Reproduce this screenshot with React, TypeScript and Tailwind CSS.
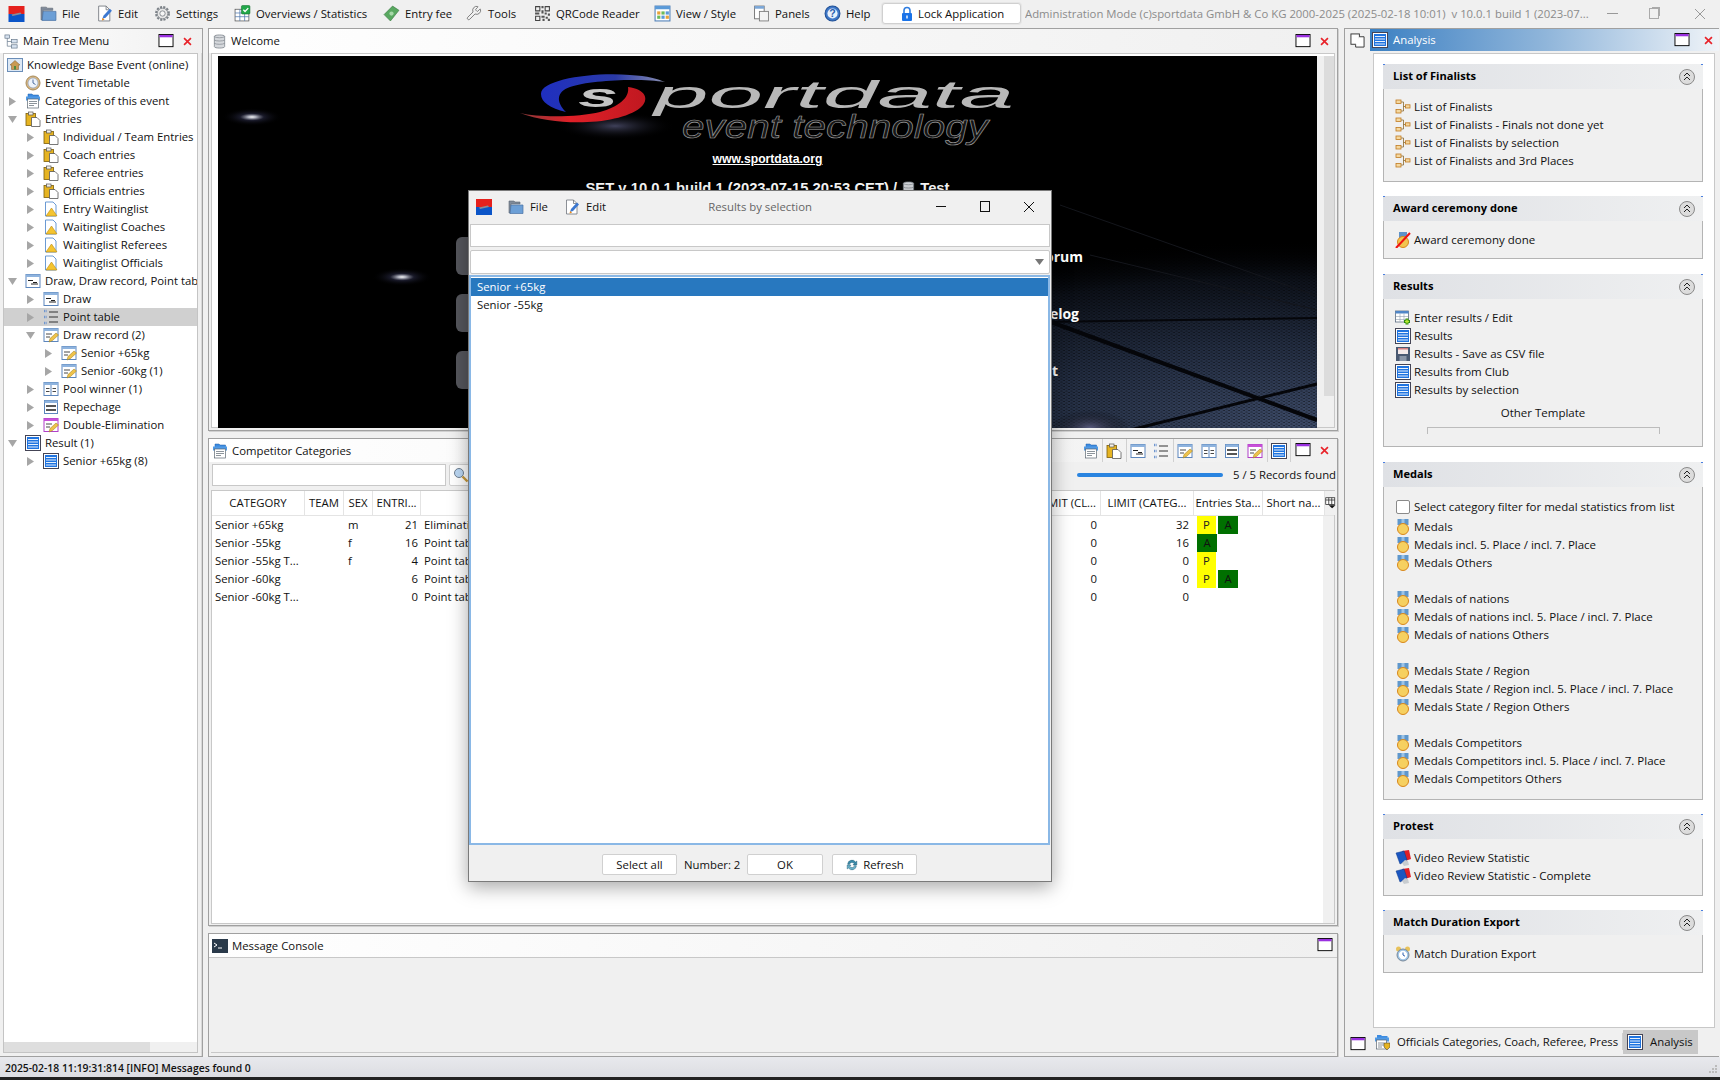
import React from "react";
import { Wrench } from "lucide-react";

const icons: Record<string, React.ReactNode> = {
  logo: (<><rect width="16" height="8" fill="#e5211d"/><rect y="8" width="16" height="8" fill="#0b55c8"/><path d="M3 8.6l9-2 1 1.4-9 2z" fill="#8c8c96"/></>),
  folder: (<><path d="M1 2h5l1 1h5v2H3v9H1z" fill="#7f8a99" stroke="#5d6673" strokeWidth=".6"/><path d="M3 6h12v8.5H2z" fill="#6c9fd6" stroke="#4a73a5" strokeWidth=".7"/></>),
  edit: (<><path d="M2.5 1h7l3.5 3.5V15h-10.500z" fill="#fff" stroke="#70757c" strokeWidth=".8"/><path d="M9.500 1v3.500H13" fill="none" stroke="#70757c" strokeWidth=".8"/><path d="M6 13l1-3 6-6.500 2 2-6 6.500z" fill="#3c78d0"/><path d="M5.500 14.500l.6-2.500 2 1.800z" fill="#e98a1c"/></>),
  gear: (<><circle cx="8" cy="8" r="6" fill="none" stroke="#7c8288" strokeWidth="2" strokeDasharray="2 1.140"/><circle cx="8" cy="8" r="5" fill="#e6e6e6" stroke="#7c8288" strokeWidth=".8"/><circle cx="8" cy="8" r="2.500" fill="#f6f6f6" stroke="#7c8288" strokeWidth=".8"/></>),
  over: (<><rect x="1" y="4" width="13" height="11" fill="#fff" stroke="#555" strokeWidth=".7"/><path d="M1 7.500h13M1 11h13M5.500 4v11M10 4v11" stroke="#4f78b0" strokeWidth=".7"/><rect x="7" y="0.500" width="8" height="8" rx="1" fill="#22a84a" stroke="#0e6a28" strokeWidth=".5"/><path d="M8.800 4.500l1.600 1.600 3-3.200" stroke="#fff" strokeWidth="1.200" fill="none"/></>),
  money: (<><path d="M1 9l8-8 6 4-8 10z" fill="#58a860" stroke="#3a7a42" strokeWidth=".6"/><circle cx="8" cy="8" r="2" fill="#a6d8a8"/></>),
  qr: (<><path d="M1 1h5v5H1zM2 2v3h3V2zM10 1h5v5h-5zM11 2v3h3V2zM1 10h5v5H1zM2 11v3h3v-3z" fill="#444" fillRule="evenodd"/><path d="M7 1h2v2H7zM7 5h2v3H7zM1 7h4v2H1zM10 7h2v2h-2zM13 8h2v2h-2zM7 10h3v2H7zM11 11h2v2h-2zM8 13h2v2H8zM13 13h2v2h-2z" fill="#555"/></>),
  view: (<><rect x="1" y="1" width="14" height="14" fill="#fff" stroke="#4f7fb8"/><rect x="1" y="1" width="14" height="3" fill="#5a9ad8"/><rect x="3" y="6" width="3" height="3" fill="#e8a33a"/><rect x="7" y="6" width="3" height="3" fill="#6dbb5a"/><rect x="11" y="6" width="3" height="3" fill="#5a9ad8"/><rect x="3" y="10" width="3" height="3" fill="#6dbb5a"/><rect x="7" y="10" width="3" height="3" fill="#5a9ad8"/><rect x="11" y="10" width="3" height="3" fill="#e8a33a"/></>),
  panels: (<><rect x="1.500" y="1" width="9" height="12" fill="#fff" stroke="#666" strokeWidth=".8"/><rect x="1.500" y="1" width="9" height="2.500" fill="#7ba7d8"/><rect x="6" y="6" width="8.500" height="9" fill="#f4f4f4" stroke="#777" strokeWidth=".8"/></>),
  help: (<><circle cx="8" cy="8" r="7" fill="#3f78c8" stroke="#1e4f96"/><circle cx="8" cy="8" r="4.800" fill="#e8f1fb"/><text x="8" y="11.500" textAnchor="middle" fontSize="10" fontWeight="700" fontFamily="Liberation Sans" fill="#2a5fae">?</text></>),
  lock: (<><path d="M5 7V4.500a3 3 0 016 0V7" fill="none" stroke="#2f7de0" strokeWidth="1.600"/><rect x="3" y="7" width="10" height="8" rx="1" fill="#1a73e8"/><rect x="7.300" y="9.500" width="1.400" height="3" fill="#fff"/></>),
  tree: (<><rect x="1" y="1" width="5" height="3.500" fill="#d8e3f0" stroke="#5f7286" strokeWidth=".7"/><rect x="8" y="6" width="6" height="3.500" fill="#d8e3f0" stroke="#5f7286" strokeWidth=".7"/><rect x="8" y="11.500" width="6" height="3.500" fill="#d8e3f0" stroke="#5f7286" strokeWidth=".7"/><path d="M3.500 4.500V13H8M3.500 8H8" fill="none" stroke="#5f7286" strokeWidth=".7"/></>),
  db: (<><path d="M2.500 2.500c0-2 11-2 11 0v11c0 2-11 2-11 0z" fill="#d6d9dd" stroke="#7a8088" strokeWidth=".8"/><path d="M2.500 2.800c2 1.600 9 1.600 11 0M2.500 6.500c2 1.300 9 1.300 11 0M2.500 10c2 1.300 9 1.300 11 0" fill="none" stroke="#7a8088" strokeWidth=".7"/></>),
  home: (<><rect x=".5" y="1.500" width="15" height="13" fill="#dce8f5" stroke="#6b8eb8"/><path d="M8 3.500L3 8h1.500v4.500h7V8H13z" fill="#c99a52" stroke="#7a5a2a" strokeWidth=".5"/><rect x="7" y="9" width="2" height="3.500" fill="#4f8a3c"/></>),
  clock: (<><circle cx="8" cy="8" r="7" fill="#d8b884" stroke="#a88a5a"/><circle cx="8" cy="8" r="5" fill="#eef3fa" stroke="#7f95b8" strokeWidth=".6"/><path d="M8 4.500V8l2.500 1.500" fill="none" stroke="#3a5f95" strokeWidth=".9"/></>),
  cats: (<><path d="M3 1h4l1 1h5.500v4H3z" fill="#3c8be0" stroke="#1f5fa8" strokeWidth=".5"/><rect x="1" y="3.500" width="14" height="4" fill="#4f9ae6"/><rect x="2.500" y="6" width="11" height="9" fill="#fff" stroke="#5a6570" strokeWidth=".7"/><path d="M4 8.500h8M4 10.500h8M4 12.500h5" stroke="#5a6570" strokeWidth=".7"/></>),
  clip: (<><rect x="1" y="2.500" width="9.500" height="12" fill="#e6b422" stroke="#7a5c0a" strokeWidth=".8"/><rect x="3.500" y="1" width="4.500" height="3" fill="#f4f0e6" stroke="#555" strokeWidth=".7"/><path d="M6.500 6.500H12l3 3v6H6.500z" fill="#fff" stroke="#555" strokeWidth=".8"/></>),
  wait: (<><path d="M2.500 1H10l3 3v11H2.500z" fill="#fff" stroke="#5a8fcf" strokeWidth=".9"/><path d="M8.500 7l5.500 8H3z" fill="#f4c430" stroke="#b88a10" strokeWidth=".6"/></>),
  draw: (<><rect x="1" y="1.500" width="14" height="13" fill="#fff" stroke="#5c86bd"/><rect x="1" y="1.500" width="14" height="2.500" fill="#8eb3de"/><path d="M3 7.500h5M6 11h7M8 9.500h4" stroke="#222" strokeWidth="1"/></>),
  pt: (<><path d="M1 2h3M1 8h3M1 14h3" stroke="#6f96cf" strokeWidth="2.500" strokeDasharray="1 .6"/><path d="M6 3h9M6 8h9M6 13h9" stroke="#333" strokeWidth="1"/></>),
  rec: (<><rect x="1" y="1.500" width="14" height="13" fill="#fff" stroke="#5c86bd"/><rect x="1" y="1.500" width="14" height="2.500" fill="#8eb3de"/><path d="M3 7h6M3 10h4" stroke="#333" strokeWidth=".9"/><path d="M6 15l1-3.500L13 6l2.500 2-6 5.500z" fill="#eec24a" stroke="#9a7a1a" strokeWidth=".5"/></>),
  pool: (<><rect x="1" y="1.500" width="14" height="13" fill="#fff" stroke="#5c86bd"/><rect x="1" y="1.500" width="14" height="2.500" fill="#8eb3de"/><path d="M8 4v10" stroke="#5c86bd"/><path d="M3 7.500h3.500M3 10.500h3.500M9.500 7.500H13M9.500 10.500H13" stroke="#333" strokeWidth=".9"/></>),
  rep: (<><rect x="1.500" y="1.500" width="13" height="13" fill="#fff" stroke="#5c86bd"/><rect x="1.500" y="1.500" width="13" height="2.500" fill="#8eb3de"/><rect x="3" y="6" width="10" height="2" fill="#555"/><rect x="3" y="10" width="10" height="2" fill="#555"/></>),
  dbl: (<><rect x="1" y="1.500" width="14" height="13" fill="#fff" stroke="#b040c8"/><rect x="1" y="1.500" width="14" height="2.500" fill="#c850d8"/><path d="M3 7h6M3 10h4" stroke="#333" strokeWidth=".9"/><path d="M6 15l1-3.500L13 6l2.500 2-6 5.500z" fill="#eec24a" stroke="#9a7a1a" strokeWidth=".5"/></>),
  res: (<><rect x=".5" y=".5" width="15" height="15" fill="#fff" stroke="#445"/><rect x="2" y="2" width="12" height="12" fill="#1f74e0"/><path d="M3 4.500h10M3 7h10M3 9.500h10M3 12h10" stroke="#fff" strokeWidth=".9"/></>),
  win: (<><rect x=".5" y=".5" width="15" height="13" fill="#fff" stroke="#000"/><rect x="1" y="1" width="14" height="2.500" fill="#9a30e0"/></>),
  x: (<path d="M3 3l10 10M13 3L3 13" stroke="#e8232a" strokeWidth="2.400"/>),
  fin: (<><path d="M6 3h2.500M6 12h2.500M8.500 3V12M8.500 7.500H11" stroke="#8a6a30" strokeWidth=".8" fill="none"/><rect x="1" y="1" width="5" height="3.500" fill="#f4d8a0" stroke="#c07a20" strokeWidth=".8"/><rect x="1" y="10.500" width="5" height="3.500" fill="#f4d8a0" stroke="#c07a20" strokeWidth=".8"/><rect x="10.500" y="5.800" width="4.500" height="3.200" fill="#f4d8a0" stroke="#c07a20" strokeWidth=".8"/></>),
  award: (<><rect x="4" y="0" width="8" height="6" fill="#5f92c8"/><circle cx="8" cy="10" r="5.500" fill="#f2c44e" stroke="#d8861a"/><path d="M1 16L15 1" stroke="#f01010" strokeWidth="2"/></>),
  enter: (<><rect x=".5" y="1" width="13" height="11" fill="#fff" stroke="#5a6b80" strokeWidth=".8"/><rect x=".5" y="1" width="13" height="2.500" fill="#4f86c8"/><path d="M1 6.500h12M1 9.500h12M5 3.500v8M9 3.500v8" stroke="#90a0b0" strokeWidth=".6"/><path d="M12 8.500v6M9 11.500h6" stroke="#2a8a10" strokeWidth="3"/><path d="M12 9.500v4M10 11.500h4" stroke="#b8e830" strokeWidth="1.400"/></>),
  save: (<><rect x="1" y="1" width="14" height="14" fill="#4a5a72"/><rect x="3" y="2" width="10" height="6" fill="#f4eaea"/><rect x="3" y="2" width="10" height="1.500" fill="#d88080"/><rect x="4.500" y="10" width="7" height="5" fill="#8a96a8"/></>),
  medal: (<><rect x="2.500" y="0" width="11" height="6" fill="#5f97cc"/><rect x="6.500" y="0" width="3" height="6" fill="#9cc3e6"/><circle cx="8" cy="10" r="5.500" fill="#f6d060" stroke="#d8861a" strokeWidth="1"/></>),
  video: (<><path d="M7 1l7-1 2 9-6 2z" fill="#e01f26"/><path d="M1 3l8-2 3 9-7 4z" fill="#1b56c0" stroke="#0c3a8a" strokeWidth=".5"/><path d="M7 13l3-3 3 1 1 4-5 1z" fill="#c8ccd0"/></>),
  alarm: (<><circle cx="3.500" cy="3" r="2.500" fill="#e8c25a"/><circle cx="12.500" cy="3" r="2.500" fill="#e8c25a"/><circle cx="8" cy="9" r="6" fill="#9cc3e6" stroke="#7a8a9a"/><circle cx="8" cy="9" r="4.200" fill="#fff"/><path d="M8 6.500V9l2 1.200" fill="none" stroke="#2a5fae"/></>),
  ofc: (<><path d="M3 1h4l1 1h5.500v4H3z" fill="#3c8be0"/><rect x="1" y="3.500" width="14" height="4" fill="#4f9ae6"/><rect x="2.500" y="6" width="10" height="9" fill="#fff" stroke="#5a6570" strokeWidth=".7"/><path d="M4 9h6M4 11h6M4 13h4" stroke="#5a6570" strokeWidth=".7"/><path d="M10 9h6v4l-3 3-3-3z" fill="#e6b422" stroke="#333" strokeWidth=".5"/></>),
  refresh: (<><path d="M3 7a5 5 0 019-2.500l1.500-1V8H9l1.500-1.500A3 3 0 005 7.500z" fill="#3a8aa8" stroke="#1e5a72" strokeWidth=".5"/><path d="M13 9a5 5 0 01-9 2.500l-1.500 1V8H7l-1.500 1.500A3 3 0 0011 8.500z" fill="#6ab0c8" stroke="#1e5a72" strokeWidth=".5"/></>),
  search: (<><circle cx="6" cy="6" r="4.500" fill="#bcd8f4" stroke="#6f7f90"/><path d="M9.500 9.500l5 5" stroke="#c89a3a" strokeWidth="2.400"/></>),
  copy: (<><rect x="1" y="1" width="9" height="11" fill="#fff" stroke="#333"/><path d="M10 4h5v11H6v-3" fill="#fff" stroke="#333"/></>),
  col: (<><rect x="1" y="1" width="12" height="9" fill="#fff" stroke="#222"/><path d="M1 4h12M5 1v9M9 1v9" stroke="#222"/><path d="M5 11h9l-4.500 4z" fill="#111"/></>),
};

function I({ n, w = 16, h = 16, c = "" }: { n: string; w?: number; h?: number; c?: string }) {
  return (
    <svg width={w} height={h} viewBox="0 0 16 16" className={`shrink-0 ${c}`}>
      {icons[n]}
    </svg>
  );
}

const menu = [
  ["folder", "File", "w-[56px]"],
  ["edit", "Edit", "w-[58px]"],
  ["gear", "Settings", "w-[80px]"],
  ["over", "Overviews / Statistics", "w-[149px]"],
  ["money", "Entry fee", "w-[83px]"],
  ["wrench", "Tools", "w-[68px]"],
  ["qr", "QRCode Reader", "w-[120px]"],
  ["view", "View / Style", "w-[99px]"],
  ["panels", "Panels", "w-[71px]"],
  ["help", "Help", "w-[58px]"],
];

function Toolbar() {
  return (
    <div className="flex h-[28px] items-center bg-[#f0f0f0] pb-[1px]">
      <div className="ml-[8px] mr-[15px] flex w-[17px] items-center">
        <I n="logo" w={17} h={16} />
      </div>
      {menu.map(([ic, t, w]) => (
        <div key={t} className={`flex items-center ${w}`}>
          <span className="flex w-[22px] shrink-0">
            {ic === "wrench" ? (
              <Wrench size={16} strokeWidth={1.2} className="text-[#666]" />
            ) : (
              <I n={ic} w={17} h={17} />
            )}
          </span>
          <span className="whitespace-nowrap">{t}</span>
        </div>
      ))}
      <div className="flex h-[21px] w-[139px] items-center rounded-[3px] border border-[#d0d0d0] bg-white pl-[16px] shadow-[0_0_0_1px_#e6e6e6]">
        <I n="lock" w={16} h={16} />
        <span className="ml-[3px]">Lock Application</span>
      </div>
      <div className="ml-[4px] w-[566px] overflow-hidden whitespace-nowrap text-[#8b8b8b]">
        Administration Mode (c)sportdata GmbH &amp; Co KG 2000-2025 (2025-02-18 10:01)&nbsp; v 10.0.1 build 1 (2023-07...
      </div>
      <div className="ml-[16px] h-px w-[11px] bg-[#999]" />
      <div className="ml-[31px] h-[11px] w-[10px] border border-[#aaa] shadow-[2px_-2px_0_-1px_#aaa]" />
      <svg width="12" height="12" viewBox="0 0 12 12" className="ml-[35px]">
        <path d="M1 1l10 10M11 1L1 11" stroke="#999" strokeWidth="1" />
      </svg>
    </div>
  );
}

type T = [number, string, string, ("o" | "c" | "")?, boolean?];
const tree: T[] = [
  [0, "home", "Knowledge Base Event (online)"],
  [1, "clock", "Event Timetable"],
  [1, "cats", "Categories of this event", "c"],
  [1, "clip", "Entries", "o"],
  [2, "clip", "Individual / Team Entries", "c"],
  [2, "clip", "Coach entries", "c"],
  [2, "clip", "Referee entries", "c"],
  [2, "clip", "Officials entries", "c"],
  [2, "wait", "Entry Waitinglist", "c"],
  [2, "wait", "Waitinglist Coaches", "c"],
  [2, "wait", "Waitinglist Referees", "c"],
  [2, "wait", "Waitinglist Officials", "c"],
  [1, "draw", "Draw, Draw record, Point table", "o"],
  [2, "draw", "Draw", "c"],
  [2, "pt", "Point table", "c", true],
  [2, "rec", "Draw record (2)", "o"],
  [3, "rec", "Senior +65kg", "c"],
  [3, "rec", "Senior -60kg (1)", "c"],
  [2, "pool", "Pool winner (1)", "c"],
  [2, "rep", "Repechage", "c"],
  [2, "dbl", "Double-Elimination", "c"],
  [1, "res", "Result (1)", "o"],
  [2, "res", "Senior +65kg (8)", "c"],
];
const pads = ["pl-[3px]", "pl-[3px]", "pl-[21px]", "pl-[39px]"];

function Arrow({ k }: { k: string }) {
  if (k === "o")
    return <svg width="9" height="9" viewBox="0 0 9 9"><path d="M0 1h9L4.500 8z" fill="#a6a6a6" /></svg>;
  if (k === "c")
    return <svg width="9" height="9" viewBox="0 0 9 9"><path d="M1 0l7 4.500L1 9z" fill="#a6a6a6" /></svg>;
  return null;
}

function Win({ c = "" }: { c?: string }) {
  return <I n="win" w={16} h={15} c={c} />;
}

function LeftPanel() {
  return (
    <div className="flex w-[203px] flex-col border-y border-r border-[#a0a0a0] shadow-[inset_-1px_0_0_#d8d8d8]">
      <div className="flex h-[24px] items-center bg-gradient-to-r from-white to-[#f0f0f0] pl-[4px]">
        <I n="tree" w={15} h={15} />
        <span className="ml-[4px] flex-1">Main Tree Menu</span>
        <Win />
        <I n="x" w={11} h={11} c="ml-[8px] mr-[9px]" />
      </div>
      <div className="ml-[3px] mr-[4px] flex h-[1000px] flex-col overflow-hidden border border-[#c4c4c4] bg-white pt-[2px]">
        <div className="flex-1">
          {tree.map(([l, ic, t, k, sel], i) => (
            <div key={i} className={`flex h-[18px] items-center whitespace-nowrap ${pads[l]} ${sel ? "bg-[#d0d0d0]" : ""}`}>
              {l > 0 && (
                <span className="flex w-[18px] shrink-0 items-center pl-[1px]">
                  <Arrow k={k || ""} />
                </span>
              )}
              <I n={ic} c="mr-[4px]" />
              <span>{t}</span>
            </div>
          ))}
        </div>
        <div className="h-[10px] bg-[#f0f0f0]">
          <div className="h-[10px] w-[146px] bg-[#dedede]" />
        </div>
      </div>
    </div>
  );
}

function Backdrop() {
  return (
    <svg viewBox="218 56 1099 372" className="absolute inset-0 h-full w-full">
      <defs>
        <radialGradient id="fl" cx="1300" cy="1420" r="620" gradientUnits="userSpaceOnUse" gradientTransform="scale(1 .3)">
          <stop offset="0" stopColor="#3d4b68" />
          <stop offset=".45" stopColor="#222c40" />
          <stop offset=".8" stopColor="#0c1018" />
          <stop offset="1" stopColor="#000" stopOpacity="0" />
        </radialGradient>
        <radialGradient id="lg">
          <stop offset="0" stopColor="#f4f4f4" />
          <stop offset=".14" stopColor="#a9abb8" />
          <stop offset=".4" stopColor="#23243a" stopOpacity=".7" />
          <stop offset="1" stopColor="#000" stopOpacity="0" />
        </radialGradient>
        <radialGradient id="gl">
          <stop offset="0" stopColor="#5a5c80" />
          <stop offset="1" stopColor="#000" stopOpacity="0" />
        </radialGradient>
        <linearGradient id="blue" x1="0" y1="0" x2="1" y2="0">
          <stop offset="0" stopColor="#1f2fc0" />
          <stop offset=".6" stopColor="#2a3aa8" />
          <stop offset="1" stopColor="#8a8fb0" />
        </linearGradient>
        <linearGradient id="red" x1="0" y1="0" x2="1" y2="0">
          <stop offset="0" stopColor="#8a3a3a" />
          <stop offset=".4" stopColor="#e02028" />
          <stop offset="1" stopColor="#c01820" />
        </linearGradient>
        <pattern id="mesh" width="5" height="3" patternUnits="userSpaceOnUse">
          <ellipse cx="1.500" cy="1" rx="1.300" ry=".6" fill="#000" opacity=".45" />
          <ellipse cx="4" cy="2.500" rx="1.300" ry=".6" fill="#000" opacity=".45" />
        </pattern>
      </defs>
      <rect x="218" y="56" width="1099" height="372" fill="#000" />
      <rect x="600" y="200" width="717" height="228" fill="url(#fl)" />
      <rect x="600" y="200" width="717" height="228" fill="url(#mesh)" />
      <g stroke="#05060a" fill="none">
        <path d="M1040 322L1317 318" strokeWidth="2" />
        <path d="M1040 318L1317 420" strokeWidth="4" />
        <path d="M1130 430L1317 384" strokeWidth="3" />
      </g>
      <g stroke="#14161c" fill="none">
        <path d="M1060 205L1317 296" />
        <path d="M1090 255L1317 310" />
      </g>
      <ellipse cx="1090" cy="428" rx="40" ry="18" fill="url(#gl)" />
      <ellipse cx="252" cy="117" rx="30" ry="9" fill="url(#lg)" />
      <ellipse cx="402" cy="277" rx="30" ry="9" fill="url(#lg)" />
      <ellipse cx="615" cy="126" rx="60" ry="14" fill="url(#gl)" opacity=".7" />
      <path d="M541 94C541 80 590 72 630 75C648 76 658 79 665 82C640 78 590 80 570 87C556 92 556 102 566 112C550 108 541 102 541 94Z" fill="url(#blue)" />
      <path d="M520 113C540 118 580 117 600 112C618 107 630 98 628 87C646 89 650 100 640 108C620 124 560 128 520 113Z" fill="url(#red)" />
      <text x="578" y="107" textLength="40" lengthAdjust="spacingAndGlyphs" fontFamily="Liberation Sans" fontWeight="700" fontStyle="italic" fontSize="34" fill="#c4c4c4">s</text>
      <text x="654" y="108" textLength="360" lengthAdjust="spacingAndGlyphs" fontFamily="Liberation Sans" fontStyle="italic" fontSize="38" fill="#b8b8b8">portdata</text>
      <text x="682" y="138" textLength="306" lengthAdjust="spacingAndGlyphs" fontFamily="Liberation Sans" fontStyle="italic" fontSize="34" fill="#151515" stroke="#a0a0a0" strokeWidth=".6">event technology</text>
    </svg>
  );
}

function Welcome() {
  return (
    <div className="flex h-[403px] flex-col border border-[#a0a0a0] shadow-[1px_1px_0_#d0d0d0]">
      <div className="flex h-[24px] items-center bg-gradient-to-r from-white to-[#f0f0f0] pl-[3px]">
        <I n="db" w={15} h={15} />
        <span className="ml-[4px] flex-1">Welcome</span>
        <Win />
        <I n="x" w={11} h={11} c="ml-[8px] mr-[7px]" />
      </div>
      <div className="mx-[2px] flex h-[375px] border border-[#c8c8c8] bg-white pl-[6px] pt-[2px]">
        <div className="relative h-[372px] w-[1099px] shrink-0 overflow-hidden bg-black font-['Liberation_Sans',sans-serif] text-white">
          <Backdrop />
          <div className="relative flex flex-col items-center pt-[94px]">
            <div className="text-[12.2px] font-bold underline">www.sportdata.org</div>
            <div className="mt-[9px] flex items-center text-[14.800px] font-bold whitespace-nowrap">
              SET v 10.0.1 build 1 (2023-07-15 20:53 CET) /<I n="db" w={15} h={15} c="mx-[4px]" />Test
            </div>
          </div>
          <div className="relative ml-[238px] mt-[38px] flex w-[627px] flex-col gap-[19px] font-['Open_Sans',sans-serif] text-[14px] font-bold">
            {["Forum", "Changelog", "Support"].map((t, i) => (
              <div key={t} className={`flex h-[38px] items-center justify-between ${i === 2 ? "pr-[25px]" : i === 1 ? "pr-[4px]" : ""}`}>
                <span className="h-[38px] w-[30px] rounded-[6px] bg-[#55565c]" />
                <span>{t}</span>
              </div>
            ))}
          </div>
        </div>
        <div className="h-full w-[18px] bg-[#f0f0f0] pl-[7px]">
          <div className="h-[340px] w-[10px] bg-[#dcdcdc]" />
        </div>
      </div>
    </div>
  );
}

const cols = ["w-[93px]", "w-[39px]", "w-[29px]", "w-[48px]", "w-[140px]", "w-[474px]", "w-[66px]", "w-[93px]", "w-[69px]", "w-[62px]"];
const heads = ["CATEGORY", "TEAM", "SEX", "ENTRI...", "DRAW", "", "LIMIT (CL...", "LIMIT (CATEG...", "Entries Sta...", "Short na..."];
const data: [string, string, string, string, string, string, string, string][] = [
  ["Senior +65kg", "m", "21", "Elimination", "0", "32", "P", "A"],
  ["Senior -55kg", "f", "16", "Point table", "0", "16", "", "A"],
  ["Senior -55kg T...", "f", "4", "Point table", "0", "0", "P", ""],
  ["Senior -60kg", "", "6", "Point table", "0", "0", "P", "A"],
  ["Senior -60kg T...", "", "0", "Point table", "0", "0", "", ""],
];

function Categories() {
  const tools = ["cats", "clip", "draw", "pt", "rec", "pool", "rep", "dbl", "res"];
  const seps = [0, 1, 3, 7, 8];
  return (
    <div className="mt-[7px] flex h-[488px] flex-col border border-[#a0a0a0] shadow-[1px_1px_0_#d0d0d0]">
      <div className="flex h-[23px] shrink-0 items-center bg-gradient-to-r from-white to-[#f0f0f0] pl-[3px]">
        <I n="cats" />
        <span className="ml-[4px] flex-1">Competitor Categories</span>
        {tools.map((t, i) => (
          <span key={t} className={`flex h-[23px] w-[23.500px] items-center justify-center ${seps.includes(i) ? "border-r border-[#d0d0d0]" : ""}`}>
            <I n={t} />
          </span>
        ))}
        <Win c="ml-[4px]" />
        <I n="x" w={11} h={11} c="ml-[8px] mr-[7px]" />
      </div>
      <div className="flex h-[28px] shrink-0 items-center pb-[2px] pl-[3px]">
        <div className="h-[22px] w-[234px] border border-[#c8c8c8] bg-white" />
        <div className="ml-[3px] flex h-[22px] w-[24px] items-center justify-center rounded-[2px] border border-[#d0d0d0] bg-white"><I n="search" /></div>
        <div className="ml-[604px] h-[4px] w-[146px] rounded-full bg-[#2a84e0]" />
        <span className="ml-[10px] whitespace-nowrap">5 / 5 Records found</span>
      </div>
      <div className="mx-[2px] mb-[1px] flex flex-1 flex-col border border-[#c8c8c8] bg-white">
        <div className="flex h-[25px] shrink-0 border-b border-[#e4e4e4]">
          {heads.map((h, i) => (
            <div key={i} className={`flex shrink-0 items-center justify-center overflow-hidden whitespace-nowrap border-r border-[#e4e4e4] ${cols[i]}`}>{h}</div>
          ))}
          <div className="flex flex-1 items-center justify-center bg-[#f0f0f0]"><I n="col" w={12} h={12} /></div>
        </div>
        <div className="flex flex-1">
          <div className="w-[1111px]">
            {data.map((r, i) => (
              <div key={i} className="flex h-[18px] items-center whitespace-nowrap">
                <span className="w-[131px] shrink-0 pl-[3px]">{r[0]}</span>
                <span className="w-[29px] shrink-0 pl-[5px]">{r[1]}</span>
                <span className="w-[46px] shrink-0 text-right">{r[2]}</span>
                <span className="w-[614px] shrink-0 pl-[6px]">{r[3]}</span>
                <span className="w-[66px] shrink-0 pr-[1px] text-right">{r[4]}</span>
                <span className="w-[91px] shrink-0 text-right">{r[5]}</span>
                <span className="ml-[8px] w-[19px] shrink-0">{r[6] && <span className="flex h-[18px] w-[19px] items-center justify-center bg-[#ffff00] text-[#222]">P</span>}</span>
                {r[6] ? (
                  <span className="ml-[2px] w-[20px] shrink-0">{r[7] && <span className="flex h-[18px] w-[20px] items-center justify-center bg-[#007000] text-[#111]">A</span>}</span>
                ) : null}
                {!r[6] && r[7] ? <span className="-ml-[19px] flex h-[18px] w-[20px] items-center justify-center bg-[#007000] text-[#111]">A</span> : null}
              </div>
            ))}
          </div>
          <div className="flex-1 self-stretch bg-[#f0f0f0]" />
        </div>
      </div>
    </div>
  );
}

function Console() {
  return (
    <div className="mt-[7px] flex flex-1 flex-col border border-[#a0a0a0] shadow-[1px_1px_0_#d0d0d0]">
      <div className="flex h-[24px] shrink-0 items-center border-b border-[#c8c8c8] bg-gradient-to-r from-white to-[#f0f0f0] pl-[3px]">
        <svg width="16" height="14" viewBox="0 0 16 14"><rect width="16" height="14" fill="#2a3a4a" /><path d="M2 4l3 2-3 2M6 9h4" stroke="#fff" fill="none" /></svg>
        <span className="ml-[4px] flex-1">Message Console</span>
        <Win c="mr-[4px]" />
      </div>
      <div className="mx-[2px] mb-[3px] flex-1 border-b border-[#c8c8c8] bg-[#f0f0f0]" />
    </div>
  );
}

function Section({ title, body, mb, children }: { title: string; body: string; mb: string; children: React.ReactNode }) {
  return (
    <div className={`relative ${mb}`}>
      <div className="flex h-[25px] items-center justify-between bg-gradient-to-r from-[#dfe1e5] to-[#eff0f1] pl-[10px] pr-[8px] text-[11.1px] font-bold text-black">
        <span>{title}</span>
        <span className="flex h-[16px] w-[16px] items-center justify-center rounded-full border border-[#8a8a8a] bg-[#dcdcdc]">
          <svg width="8" height="9" viewBox="0 0 8 9"><path d="M1 4l3-3 3 3M1 8l3-3 3 3" fill="none" stroke="#222" /></svg>
        </span>
      </div>
      <span className="absolute left-0 top-0 h-px w-[2px] bg-[#4a7fe0]" />
      <span className="absolute right-0 top-0 h-px w-[2px] bg-[#4a7fe0]" />
      <div className={`border-x border-b border-[#b4b4b4] bg-[#f0f0f0] pl-[11px] text-[11.5px] ${body}`}>{children}</div>
    </div>
  );
}

function Item({ n, t }: { n: string; t: string }) {
  return (
    <div className="flex h-[18px] items-center whitespace-nowrap">
      <I n={n} c="mr-[3px]" />
      <span>{t}</span>
    </div>
  );
}

const medalGroups = [
  ["Medals", "Medals incl. 5. Place / incl. 7. Place", "Medals Others"],
  ["Medals of nations", "Medals of nations incl. 5. Place / incl. 7. Place", "Medals of nations Others"],
  ["Medals State / Region", "Medals State / Region incl. 5. Place / incl. 7. Place", "Medals State / Region Others"],
  ["Medals Competitors", "Medals Competitors incl. 5. Place / incl. 7. Place", "Medals Competitors Others"],
];

function RightPanel() {
  return (
    <div className="ml-[6px] flex w-[375px] border-y border-l border-[#a0a0a0] shadow-[0_1px_0_#d0d0d0]">
      <div className="flex w-[25px] shrink-0 flex-col items-center justify-between pb-[4px] pt-[4px]">
        <I n="copy" w={15} h={15} />
        <Win />
      </div>
      <div className="flex flex-1 flex-col">
        <div className="flex h-[22px] items-center bg-gradient-to-r from-[#3a80c2] via-[#8fb5da] to-[#f0f4f8] pl-[2px]">
          <I n="res" />
          <span className="ml-[5px] flex-1 text-white">Analysis</span>
          <Win />
          <I n="x" w={11} h={11} c="ml-[13px] mr-[5px]" />
        </div>
        <div className="ml-[3px] mr-[4px] mt-[2px] h-[975px] border border-[#c8c8c8] bg-white pl-[9px] pr-[11px] pt-[10px]">
          <Section title="List of Finalists" body="pt-[9px] pb-[11px]" mb="mb-[14px]">
            {["List of Finalists", "List of Finalists - Finals not done yet", "List of Finalists by selection", "List of Finalists and 3rd Places"].map((t) => <Item key={t} n="fin" t={t} />)}
          </Section>
          <Section title="Award ceremony done" body="pt-[10px] pb-[9px]" mb="mb-[15px]">
            <Item n="award" t="Award ceremony done" />
          </Section>
          <Section title="Results" body="pt-[10px] pb-[12px]" mb="mb-[15px]">
            <Item n="enter" t="Enter results / Edit" />
            <Item n="res" t="Results" />
            <Item n="save" t="Results - Save as CSV file" />
            <Item n="res" t="Results from Club" />
            <Item n="res" t="Results by selection" />
            <div className="flex h-[28px] items-center justify-center pr-[11px]">Other Template</div>
            <div className="ml-[32px] h-[7px] w-[233px] border-x border-t border-[#bcbcbc]" />
          </Section>
          <Section title="Medals" body="pt-[10px] pb-[11px]" mb="mb-[14px]">
            <div className="mb-[1px] flex h-[20px] items-center whitespace-nowrap">
              <span className="ml-[1px] mr-[4px] h-[14px] w-[14px] rounded-[2px] border border-[#8a8a8a] bg-white" />
              Select category filter for medal statistics from list
            </div>
            {medalGroups.map((g, i) => (
              <div key={i} className={i < 3 ? "pb-[18px]" : ""}>
                {g.map((t) => <Item key={t} n="medal" t={t} />)}
              </div>
            ))}
          </Section>
          <Section title="Protest" body="pt-[10px] pb-[10px]" mb="mb-[14px]">
            <Item n="video" t="Video Review Statistic" />
            <Item n="video" t="Video Review Statistic - Complete" />
          </Section>
          <Section title="Match Duration Export" body="pt-[10px] pb-[9px]" mb="">
            <Item n="alarm" t="Match Duration Export" />
          </Section>
        </div>
        <div className="flex h-[27px] items-center pl-[3px]">
          <I n="ofc" c="ml-[1px]" />
          <span className="ml-[7px] w-[226px] whitespace-nowrap border-r border-[#d0d0d0]">Officials Categories, Coach, Referee, Press</span>
          <div className="flex h-[24px] w-[75px] items-center bg-[#c8c8c8] pl-[4px]">
            <I n="res" />
            <span className="ml-[7px]">Analysis</span>
          </div>
        </div>
      </div>
    </div>
  );
}

function Dialog() {
  return (
    <div className="absolute left-[468px] top-[190px] flex h-[692px] w-[584px] flex-col border border-[#7a7a7a] bg-[#f0f0f0] shadow-[0_5px_18px_rgba(0,0,0,0.35)]">
      <div className="flex h-[33px] shrink-0 items-center pb-[2px] pl-[7px]">
        <I n="logo" />
        <I n="folder" c="ml-[16px]" />
        <span className="ml-[6px]">File</span>
        <I n="edit" c="ml-[16px]" />
        <span className="ml-[6px]">Edit</span>
        <span className="ml-[81px] w-[146px] whitespace-nowrap text-center text-[#666]">Results by selection</span>
        <span className="ml-[103px] h-px w-[10px] bg-[#111]" />
        <span className="ml-[34px] h-[11px] w-[10px] border border-[#111]" />
        <svg width="12" height="12" viewBox="0 0 12 12" className="ml-[33px]"><path d="M1 1l10 10M11 1L1 11" stroke="#111" /></svg>
      </div>
      <div className="mx-[1px] h-[23px] shrink-0 border border-[#c8c8c8] bg-white" />
      <div className="mx-[1px] mt-[3px] flex h-[24px] shrink-0 items-center justify-end rounded-[2px] border border-[#c8c8c8] bg-white pr-[5px]">
        <svg width="9" height="6" viewBox="0 0 9 6"><path d="M0 0h9L4.500 6z" fill="#777" /></svg>
      </div>
      <div className="mr-[1px] mt-px h-[570px] shrink-0 border-2 border-[#8ab8e6] bg-white pt-px">
        <div className="flex h-[18px] items-center bg-[#2878bf] pl-[6px] text-white">Senior +65kg</div>
        <div className="flex h-[18px] items-center pl-[6px]">Senior -55kg</div>
      </div>
      <div className="mt-[9px] flex items-center pl-[133px]">
        <div className="flex h-[21px] w-[75px] items-center justify-center rounded-[2px] border border-[#d0d0d0] bg-white">Select all</div>
        <span className="ml-[7px] w-[63px] whitespace-nowrap">Number: 2</span>
        <div className="flex h-[21px] w-[76px] items-center justify-center rounded-[2px] border border-[#d0d0d0] bg-white">OK</div>
        <div className="ml-[9px] flex h-[21px] w-[85px] items-center justify-center rounded-[2px] border border-[#d0d0d0] bg-white">
          <I n="refresh" w={14} h={14} c="mr-[4px]" />Refresh
        </div>
      </div>
    </div>
  );
}

export default function App() {
  return (
    <div className="relative flex h-[1080px] w-[1720px] flex-col overflow-hidden bg-[#f0f0f0] font-['Open_Sans',sans-serif] text-[11.350px] text-[#111]">
      <Toolbar />
      <div className="flex h-[1029px]">
        <LeftPanel />
        <div className="ml-[5px] flex w-[1130px] flex-col">
          <Welcome />
          <Categories />
          <Console />
        </div>
        <RightPanel />
      </div>
      <div className="flex h-[20px] items-center justify-between bg-gradient-to-b from-[#e8e9ed] to-[#dcdde2] pl-[5px] pt-[3px] text-[10.400px] font-semibold">
        <span>2025-02-18 11:19:31:814 [INFO] Messages found 0</span>
        <svg width="12" height="12" viewBox="0 0 12 12" className="mr-[2px]"><path d="M9 2h2v2H9zM6 5h2v2H6zM9 5h2v2H9zM3 8h2v2H3zM6 8h2v2H6zM9 8h2v2H9z" fill="#bbb" /></svg>
      </div>
      <div className="h-[3px] bg-[#222]" />
      <Dialog />
    </div>
  );
}
